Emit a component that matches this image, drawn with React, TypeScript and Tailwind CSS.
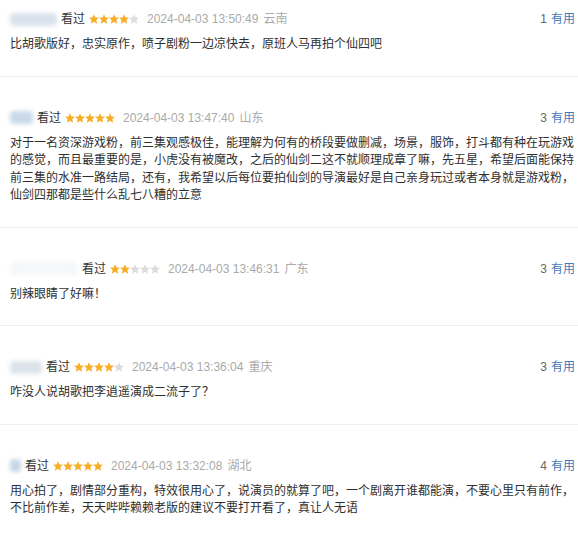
const reviews = [
  {
    nameW: "w-[47px]",
    nameBg: "bg-[#d9e2ec]",
    stars: 4,
    time: "2024-04-03 13:50:49",
    loc: "云南",
    votes: 1,
    text: "比胡歌版好，忠实原作，喷子剧粉一边凉快去，原班人马再拍个仙四吧",
  },
  {
    nameW: "w-[23px]",
    nameBg: "bg-[#c9d9e8]",
    stars: 5,
    time: "2024-04-03 13:47:40",
    loc: "山东",
    votes: 3,
    text: "对于一名资深游戏粉，前三集观感极佳，能理解为何有的桥段要做删减，场景，服饰，打斗都有种在玩游戏的感觉，而且最重要的是，小虎没有被魔改，之后的仙剑二这不就顺理成章了嘛，先五星，希望后面能保持前三集的水准一路结局，还有，我希望以后每位要拍仙剑的导演最好是自己亲身玩过或者本身就是游戏粉，仙剑四那都是些什么乱七八糟的立意",
  },
  {
    nameW: "w-[68px]",
    nameBg: "bg-[#f6f7f9]",
    stars: 2,
    time: "2024-04-03 13:46:31",
    loc: "广东",
    votes: 3,
    text: "别辣眼睛了好嘛！",
  },
  {
    nameW: "w-[32px]",
    nameBg: "bg-[#dde3ea]",
    stars: 4,
    time: "2024-04-03 13:36:04",
    loc: "重庆",
    votes: 3,
    text: "咋没人说胡歌把李逍遥演成二流子了？",
  },
  {
    nameW: "w-[11px]",
    nameBg: "bg-[#c6d6e6]",
    stars: 5,
    time: "2024-04-03 13:32:08",
    loc: "湖北",
    votes: 4,
    text: "用心拍了，剧情部分重构，特效很用心了，说演员的就算了吧，一个剧离开谁都能演，不要心里只有前作，不比前作差，天天哔哔赖赖老版的建议不要打开看了，真让人无语",
  },
];

function Star({ on }: { on: boolean }) {
  return (
    <svg width="10" height="10" viewBox="1.2 1.5 21.6 21" className="shrink-0">
      <path
        d="M12 1.5l3.1 7.1 7.7.7-5.8 5.1 1.7 7.6L12 18l-6.7 4 1.7-7.6-5.8-5.1 7.7-.7z"
        fill={on ? "#f7ad24" : "#dcdcdc"}
      />
    </svg>
  );
}

export default function App() {
  return (
    <div
      className="w-[578px] h-[540px] overflow-hidden bg-white text-[12px]"
      style={{ fontFamily: '"Liberation Sans", "Noto Sans CJK SC", sans-serif' }}
    >
      {reviews.map((r, i) => (
        <div
          key={i}
          className={`border-b border-[#efefef] pl-[10px] pr-[3px] pb-[22px] ${i === 0 ? "pt-[10px]" : "pt-[32px]"}`}
        >
          <div className="flex items-center h-[18px]">
            <span className={`${r.nameW} h-[13px] ${r.nameBg} blur-[2px] rounded-sm`} />
            <span className="ml-[4px] text-[#333]">看过</span>
            <span className="ml-[4px] flex">
              {[0, 1, 2, 3, 4].map((s) => (
                <Star key={s} on={s < r.stars} />
              ))}
            </span>
            <span className="ml-[8px] text-[#aaa]">{r.time}</span>
            <span className="ml-[5px] text-[#aaa]">{r.loc}</span>
            <span className="ml-auto text-[#666]">{r.votes}</span>
            <span className="ml-[4px] text-[#3f7ab8]">有用</span>
          </div>
          <p className="mt-[8px] leading-[17.5px] text-[#2f2f2f]">{r.text}</p>
        </div>
      ))}
    </div>
  );
}
